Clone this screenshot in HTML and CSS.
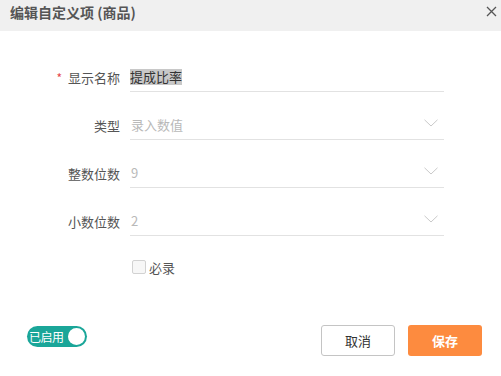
FILE: index.html
```html
<!DOCTYPE html>
<html lang="zh">
<head>
<meta charset="utf-8">
<link rel="stylesheet" href="styles.css">
</head>
<body>
<div class="dialog">
  <div class="header">
    <span class="title">编辑自定义项 (商品)</span>
    <svg class="close" width="11" height="11" viewBox="0 0 11 11"><path d="M1 1 L10 10 M10 1 L1 10" stroke="#555" stroke-width="1.3" fill="none"/></svg>
  </div>
  <div class="form">
    <div class="row">
      <div class="label"><span class="star">*</span>显示名称</div>
      <div class="field"><span class="value sel">提成比率</span></div>
    </div>
    <div class="row">
      <div class="label">类型</div>
      <div class="field"><span class="value ph">录入数值</span><svg class="chev" width="14" height="8" viewBox="0 0 14 8"><path d="M0.5 0.8 L7 7 L13.5 0.8" stroke="#c9c9c9" stroke-width="1" fill="none"/></svg></div>
    </div>
    <div class="row">
      <div class="label">整数位数</div>
      <div class="field"><span class="value ph">9</span><svg class="chev" width="14" height="8" viewBox="0 0 14 8"><path d="M0.5 0.8 L7 7 L13.5 0.8" stroke="#c9c9c9" stroke-width="1" fill="none"/></svg></div>
    </div>
    <div class="row">
      <div class="label">小数位数</div>
      <div class="field"><span class="value ph">2</span><svg class="chev" width="14" height="8" viewBox="0 0 14 8"><path d="M0.5 0.8 L7 7 L13.5 0.8" stroke="#c9c9c9" stroke-width="1" fill="none"/></svg></div>
    </div>
    <div class="check-row">
      <span class="box"></span><span class="check-text">必录</span>
    </div>
  </div>
  <div class="footer">
    <div class="toggle"><span class="toggle-text">已启用</span><span class="knob"></span></div>
    <div class="buttons">
      <button class="btn cancel">取消</button>
      <button class="btn save">保存</button>
    </div>
  </div>
</div>
</body>
</html>
```
FILE: styles.css
```css
html, body {
  margin: 0;
  padding: 0;
  background: #fff;
}
body {
  font-family: "Noto Sans CJK SC", "Noto Sans", sans-serif;
  width: 501px;
  height: 376px;
  overflow: hidden;
}
.dialog {
  width: 501px;
  height: 376px;
  display: flex;
  flex-direction: column;
}
.header {
  height: 31px;
  box-sizing: border-box;
  background: #f0f0f0;
  display: flex;
  align-items: flex-start;
  justify-content: space-between;
  padding: 0 4px 0 10px;
}
.title {
  font-size: 14px;
  font-weight: bold;
  color: #555;
  line-height: 14px;
  margin-top: 5px;
}
.close {
  margin-top: 6px;
}
.form {
  padding-top: 31px;
  display: flex;
  flex-direction: column;
}
.row {
  display: flex;
  align-items: center;
  height: 30px;
  margin-bottom: 18px;
}
.label {
  width: 120px;
  text-align: right;
  font-size: 13px;
  color: #555;
  margin-right: 10px;
  line-height: 1;
}
.star {
  color: #e5484d;
  font-size: 12px;
  margin-right: 6px;
}
.field {
  width: 314px;
  height: 30px;
  box-sizing: border-box;
  border-bottom: 1px solid #e2e2e2;
  display: flex;
  align-items: center;
  justify-content: space-between;
  padding-right: 6px;
}
.value {
  font-size: 13px;
  line-height: 16px;
  color: #333;
}
.sel {
  background: #c8c8c8;
  margin-left: 0;
}
.ph {
  color: #b9b9b9;
  margin-left: 1px;
}
.chev {
  margin-top: -4px;
}
.check-row {
  display: flex;
  align-items: center;
  height: 26px;
  padding-left: 132px;
}
.box {
  width: 12px;
  height: 12px;
  border: 1px solid #d2d2d2;
  border-radius: 2px;
  background: #f7f7f7;
}
.check-text {
  font-size: 13px;
  color: #555;
  margin-left: 3px;
}
.footer {
  margin-top: 45px;
  display: flex;
  justify-content: space-between;
  align-items: flex-start;
  padding: 0 19px 0 27px;
}
.toggle {
  margin-top: 1px;
  width: 60px;
  height: 21px;
  border-radius: 11px;
  background: #1aa699;
  display: flex;
  align-items: center;
  justify-content: space-between;
  padding: 0 2px 0 2px;
  box-sizing: border-box;
}
.toggle-text {
  color: #fff;
  font-size: 12px;
  line-height: 1;
  letter-spacing: -0.5px;
}
.knob {
  width: 17px;
  height: 17px;
  border-radius: 50%;
  background: #fff;
}
.buttons {
  display: flex;
  gap: 13px;
}
.btn {
  height: 31px;
  border-radius: 3px;
  font-family: "Noto Sans CJK SC", "Noto Sans", sans-serif;
  font-size: 13px;
  padding: 0;
}
.cancel {
  width: 74px;
  background: #fff;
  border: 1px solid #c4c4c4;
  color: #333;
}
.save {
  width: 74px;
  background: #fd8b3f;
  border: none;
  color: #fff;
  font-weight: bold;
}
```
